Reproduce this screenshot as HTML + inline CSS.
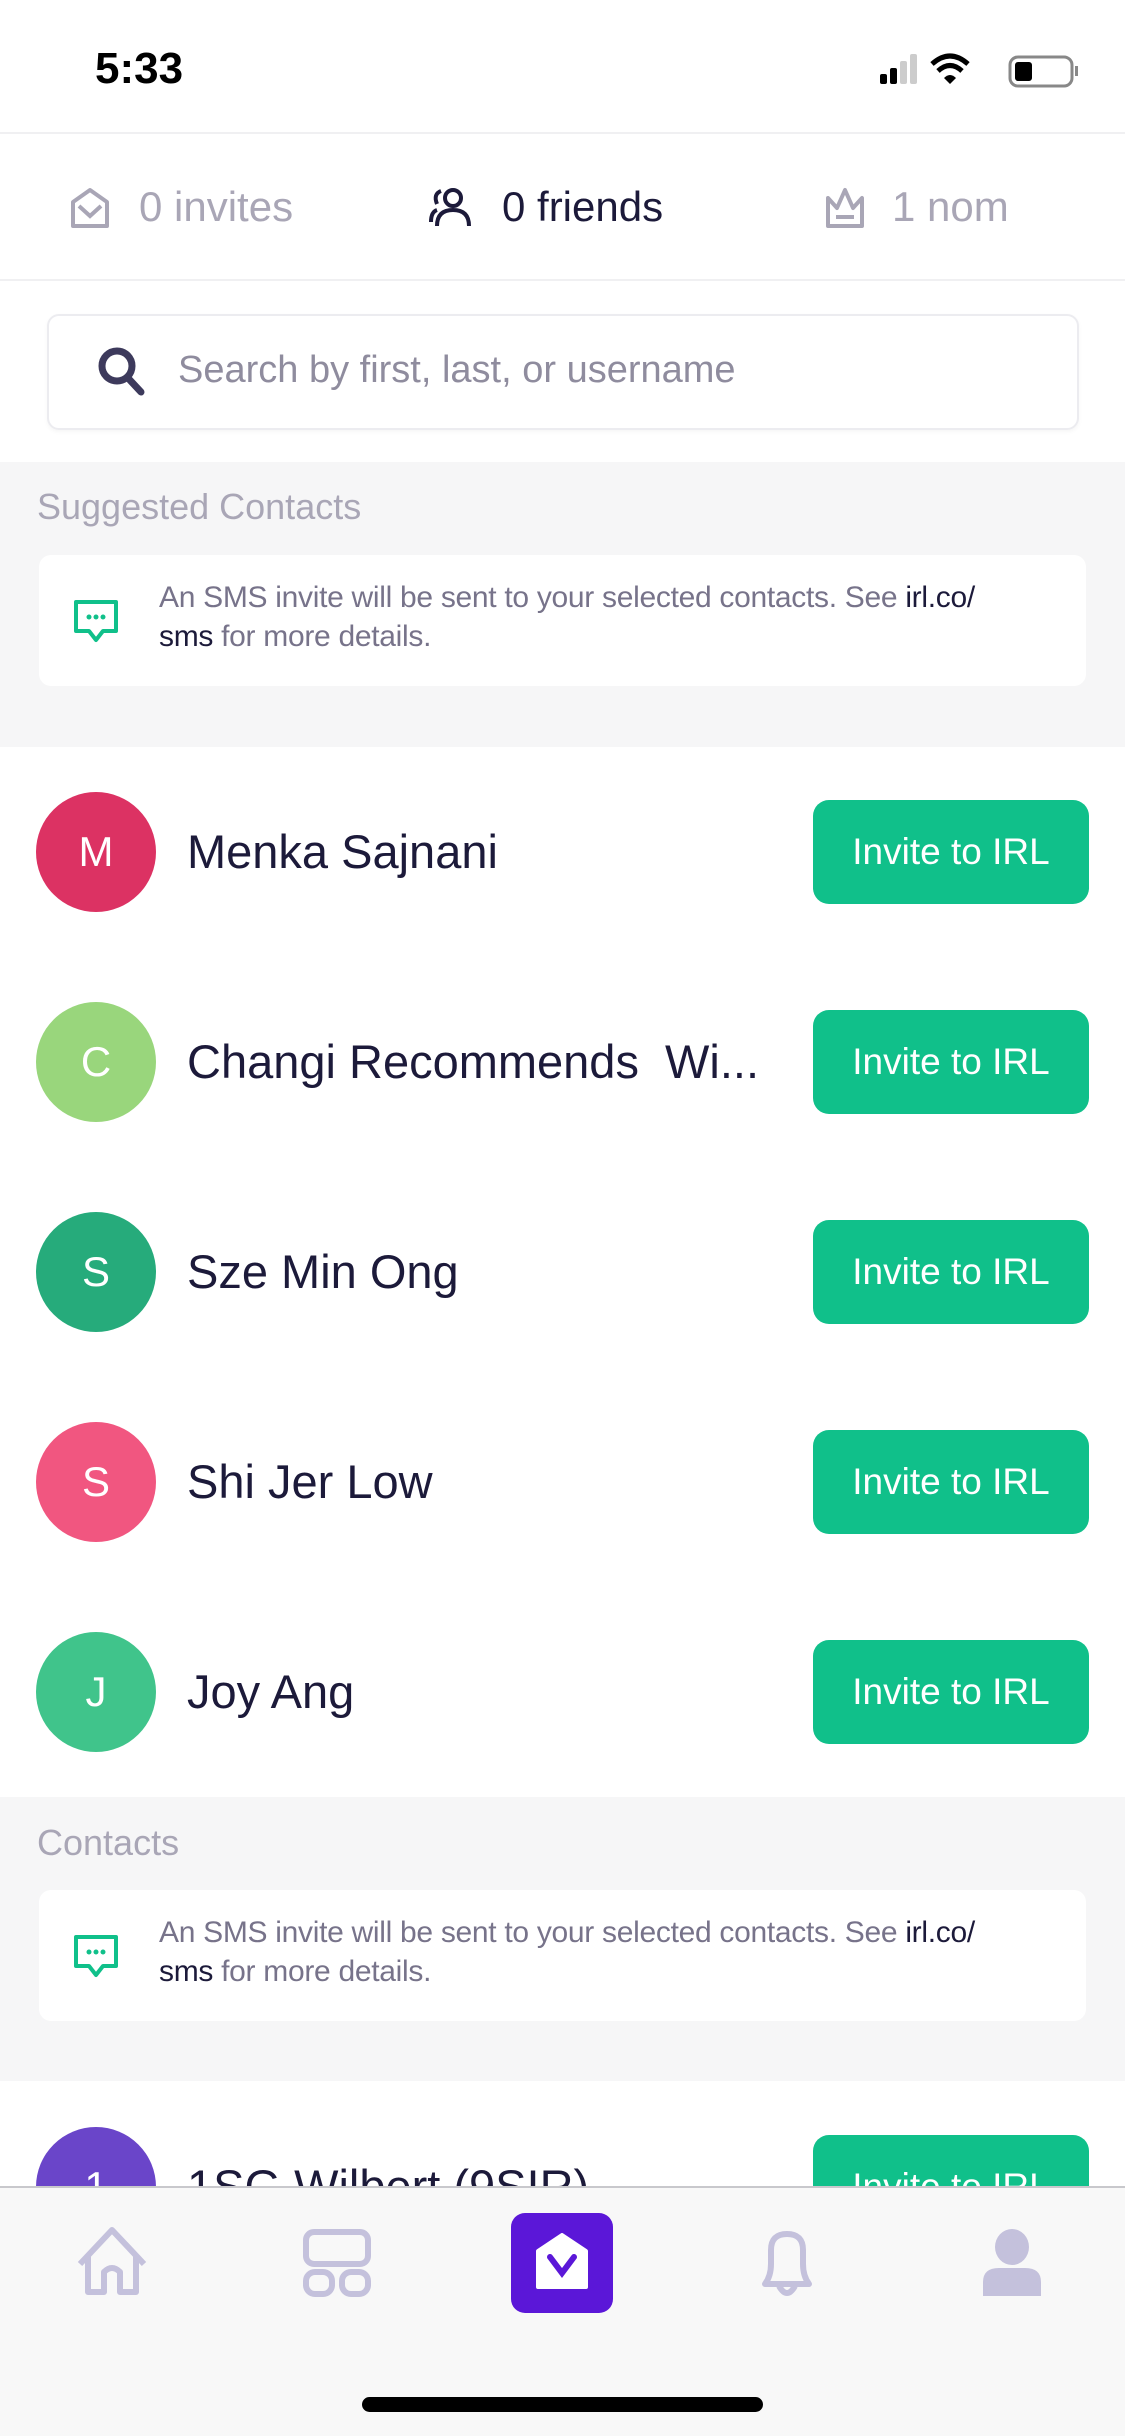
<!DOCTYPE html>
<html><head><meta charset="utf-8"><style>
*{margin:0;padding:0;box-sizing:border-box}
body{width:1125px;height:2436px;position:relative;background:#fff;font-family:"Liberation Sans",sans-serif;overflow:hidden}
.a{position:absolute}
.gray{background:#f6f6f7}
.tab{font-size:42px;color:#a9a6b6;white-space:nowrap}
.av{position:absolute;left:36px;width:120px;height:120px;border-radius:50%;color:#fff;font-size:42px;text-align:center;line-height:120px}
.nm{position:absolute;left:187px;font-size:47px;color:#1c1a3a;white-space:nowrap;line-height:60px}
.btn{position:absolute;left:813px;width:276px;height:104px;border-radius:16px;background:#10c08a;color:#fff;font-size:37px;text-align:center;line-height:104px}
.card{position:absolute;left:39px;width:1047px;height:131px;background:#fff;border-radius:12px}
.card p{position:absolute;left:120px;top:23px;font-size:30px;line-height:39px;color:#77738a;width:920px;white-space:nowrap;letter-spacing:-0.3px}
.card b{font-weight:normal;color:#1c1a3a}
.lbl{position:absolute;left:37px;font-size:36px;color:#a9a6b6}
</style></head><body>
<div class="a" style="left:95px;top:44px;font-size:44px;font-weight:bold;color:#000">5:33</div>
<svg class="a" style="left:880px;top:50px" width="200" height="40">
<rect x="0" y="24" width="7" height="10" rx="2" fill="#000"/><rect x="10" y="18" width="7" height="16" rx="2" fill="#000"/><rect x="20" y="11" width="7" height="23" rx="2" fill="#ccc"/><rect x="30" y="4" width="7" height="30" rx="2" fill="#ccc"/>
<path d="M52 14 Q70 -2 88 14" stroke="#000" stroke-width="5" fill="none"/><path d="M58 21 Q70 10 82 21" stroke="#000" stroke-width="5" fill="none"/><path d="M64 28 L70 34 L76 28 Q70 22 64 28Z" fill="#000"/>
<rect x="130" y="7" width="62" height="29" rx="8" stroke="#888" stroke-width="3" fill="none"/><rect x="135" y="12" width="17" height="19" rx="3" fill="#000"/><rect x="195" y="16" width="3" height="10" fill="#888"/>
</svg>
<div class="a" style="left:0;top:132px;width:1125px;height:2px;background:#f0f0f2"></div>
<svg class="a" style="left:70px;top:186px" width="40" height="44"><path d="M3 16 L20 4 L37 16 V40 H3Z" stroke="#a9a6b6" stroke-width="4" fill="none" stroke-linejoin="round"/><path d="M9 20 L20 30 L31 20" stroke="#a9a6b6" stroke-width="4" fill="none"/></svg>
<div class="a tab" style="left:139px;top:183px">0 invites</div>
<svg class="a" style="left:427px;top:186px" width="48" height="44"><circle cx="26" cy="12" r="8" stroke="#1c1a3a" stroke-width="4" fill="none"/><path d="M10 40 Q10 24 26 24 Q42 24 42 40" stroke="#1c1a3a" stroke-width="4" fill="none"/><path d="M14 5 Q6 8 10 18 M4 36 Q4 26 10 24" stroke="#1c1a3a" stroke-width="4" fill="none"/></svg>
<div class="a tab" style="left:502px;top:183px;color:#1c1a3a">0 friends</div>
<svg class="a" style="left:824px;top:184px" width="42" height="46"><path d="M4 42 V14 L13 24 L21 6 L29 24 L38 14 V42Z" stroke="#a9a6b6" stroke-width="4" fill="none" stroke-linejoin="round"/><path d="M12 33 H30" stroke="#a9a6b6" stroke-width="4"/></svg>
<div class="a tab" style="left:892px;top:183px">1 nom</div>
<div class="a" style="left:0;top:279px;width:1125px;height:2px;background:#f0f0f2"></div>
<div class="a" style="left:47px;top:314px;width:1032px;height:116px;border:2px solid #ececf0;border-radius:12px;box-shadow:0 2px 4px rgba(0,0,0,.04)"></div>
<svg class="a" style="left:97px;top:346px" width="50" height="52"><circle cx="20" cy="20" r="15" stroke="#3d3a5c" stroke-width="7" fill="none"/><path d="M31 32 L44 46" stroke="#3d3a5c" stroke-width="7" stroke-linecap="round"/></svg>
<div class="a" style="left:178px;top:349px;font-size:38px;color:#8f8c9e">Search by first, last, or username</div>

<div class="a gray" style="left:0;top:462px;width:1125px;height:285px"></div>
<div class="lbl" style="top:486px">Suggested Contacts</div>
<div class="card" style="top:555px"><svg class="a" style="left:34px;top:44px" width="48" height="48"><path d="M3 3 H43 V32 H30 L23 41 L16 32 H3Z" stroke="#10c08a" stroke-width="4" fill="none" stroke-linejoin="round"/><circle cx="16" cy="18" r="2.5" fill="#10c08a"/><circle cx="23" cy="18" r="2.5" fill="#10c08a"/><circle cx="30" cy="18" r="2.5" fill="#10c08a"/></svg><p>An SMS invite will be sent to your selected contacts. See <b>irl.co/</b><br><b>sms</b> for more details.</p></div>

<div class="av" style="top:792px;background:#dc3263">M</div><div class="nm" style="top:822px">Menka Sajnani</div><div class="btn" style="top:800px">Invite to IRL</div>
<div class="av" style="top:1002px;background:#99d67c">C</div><div class="nm" style="top:1032px">Changi Recommends&nbsp; Wi...</div><div class="btn" style="top:1010px">Invite to IRL</div>
<div class="av" style="top:1212px;background:#26ab7b">S</div><div class="nm" style="top:1242px">Sze Min Ong</div><div class="btn" style="top:1220px">Invite to IRL</div>
<div class="av" style="top:1422px;background:#f15680">S</div><div class="nm" style="top:1452px">Shi Jer Low</div><div class="btn" style="top:1430px">Invite to IRL</div>
<div class="av" style="top:1632px;background:#40c48b">J</div><div class="nm" style="top:1662px">Joy Ang</div><div class="btn" style="top:1640px">Invite to IRL</div>

<div class="a gray" style="left:0;top:1797px;width:1125px;height:284px"></div>
<div class="lbl" style="top:1822px">Contacts</div>
<div class="card" style="top:1890px"><svg class="a" style="left:34px;top:44px" width="48" height="48"><path d="M3 3 H43 V32 H30 L23 41 L16 32 H3Z" stroke="#10c08a" stroke-width="4" fill="none" stroke-linejoin="round"/><circle cx="16" cy="18" r="2.5" fill="#10c08a"/><circle cx="23" cy="18" r="2.5" fill="#10c08a"/><circle cx="30" cy="18" r="2.5" fill="#10c08a"/></svg><p>An SMS invite will be sent to your selected contacts. See <b>irl.co/</b><br><b>sms</b> for more details.</p></div>

<div class="av" style="top:2127px;background:#6a45c9">1</div><div class="nm" style="top:2157px">1SG Wilbert (9SIR)</div><div class="btn" style="top:2135px">Invite to IRL</div>

<div class="a" style="left:0;top:2186px;width:1125px;height:250px;background:#f8f8f8;border-top:2px solid #c8c8cc"></div>
<svg class="a" style="left:74px;top:2226px" width="76" height="72"><path d="M6 38 L38 4 L70 38 M14 30 V66 H30 V46 Q38 38 46 46 V66 H62 V30" stroke="#c4c1dc" stroke-width="6" fill="none" stroke-linejoin="round"/></svg>
<svg class="a" style="left:302px;top:2229px" width="70" height="68"><rect x="4" y="3" width="62" height="32" rx="8" stroke="#c4c1dc" stroke-width="6" fill="none"/><rect x="4" y="43" width="26" height="22" rx="9" stroke="#c4c1dc" stroke-width="6" fill="none"/><rect x="40" y="43" width="26" height="22" rx="9" stroke="#c4c1dc" stroke-width="6" fill="none"/></svg>
<div class="a" style="left:511px;top:2213px;width:102px;height:100px;border-radius:14px;background:#5b17d8"></div>
<svg class="a" style="left:535px;top:2233px" width="54" height="58"><path d="M3 18 L27 2 L51 18 V54 H3Z" fill="#fff" stroke="#fff" stroke-width="4" stroke-linejoin="round"/><path d="M15 24 L27 40 L39 24" stroke="#5b17d8" stroke-width="6" fill="none" stroke-linecap="round"/></svg>
<svg class="a" style="left:757px;top:2228px" width="60" height="72"><path d="M8 56 Q14 48 14 36 V22 Q14 6 30 6 Q46 6 46 22 V36 Q46 48 52 56Z" stroke="#c4c1dc" stroke-width="6" fill="none" stroke-linejoin="round"/><path d="M22 58 Q30 72 38 58" stroke="#c4c1dc" stroke-width="6" fill="none"/></svg>
<svg class="a" style="left:981px;top:2228px" width="62" height="70"><ellipse cx="31" cy="19" rx="17" ry="18" fill="#c4c1dc"/><path d="M2 68 V54 Q2 40 18 40 H44 Q60 40 60 54 V68Z" fill="#c4c1dc"/></svg>
<div class="a" style="left:362px;top:2397px;width:401px;height:15px;border-radius:8px;background:#000"></div>
</body></html>
